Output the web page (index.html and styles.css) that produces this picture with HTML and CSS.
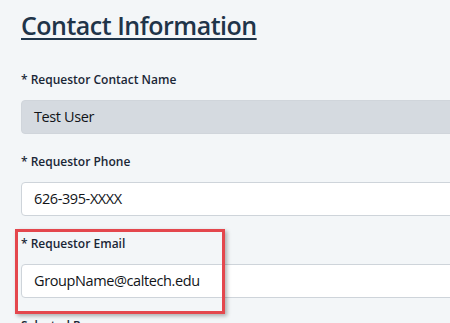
FILE: index.html
```html
<!DOCTYPE html>
<html lang="en">
<head>
<meta charset="utf-8">
<title>Contact Information</title>
<link rel="stylesheet" href="styles.css">
</head>
<body>
<main class="page">
  <h2 class="section-title">Contact Information</h2>
  <div class="field">
    <label class="field-label">* Requestor Contact Name</label>
    <div class="input input-readonly">Test User</div>
  </div>
  <div class="field">
    <label class="field-label">* Requestor Phone</label>
    <div class="input">626-395-XXXX</div>
  </div>
  <div class="field">
    <label class="field-label">* Requestor Email</label>
    <div class="input">GroupName@caltech.edu</div>
  </div>
  <div class="field">
    <label class="field-label">Selected Resources</label>
  </div>
  <div class="highlight"></div>
</main>
</body>
</html>
```
FILE: styles.css
```css
html, body {
  margin: 0;
  padding: 0;
  background: #f3f6f8;
  overflow: hidden;
}
.page {
  position: relative;
  width: 450px;
  height: 323px;
  overflow: hidden;
  padding: 0 0 0 21px;
  box-sizing: border-box;
  font-family: "Open Sans", "Noto Sans", sans-serif;
  color: #1d2b3a;
}
.section-title {
  margin: 0;
  padding-top: 8px;
  font-size: 25px;
  line-height: 34px;
  font-weight: 600;
  color: #1f3449;
  text-decoration: underline;
  text-decoration-thickness: 1.5px;
  text-underline-offset: 3px;
  letter-spacing: -0.5px;
  height: 28px;
}
.field {
  display: flex;
  flex-direction: column;
  margin-top: 0;
}
.section-title + .field {
  margin-top: 34px;
}
.field-label {
  font-size: 12px;
  line-height: 20px;
  font-weight: 600;
  color: #1a2736;
  margin-bottom: 10px;
  letter-spacing: 0;
}
.input {
  width: 460px;
  height: 34px;
  box-sizing: border-box;
  border: 1px solid #ced4da;
  border-radius: 4px;
  background: #ffffff;
  padding: 0 12px;
  font-size: 14.5px;
  line-height: 32px;
  color: #111418;
  margin-bottom: 18px;
  letter-spacing: -0.4px;
}
.input-readonly {
  background: #d5dae0;
  border-color: #d0d5db;
}
.highlight {
  position: absolute;
  left: 15px;
  top: 229px;
  width: 210px;
  height: 85px;
  box-sizing: border-box;
  border: 3px solid #e4474d;
  box-shadow: 2px 2px 4px rgba(0, 0, 0, 0.3);
}
```
